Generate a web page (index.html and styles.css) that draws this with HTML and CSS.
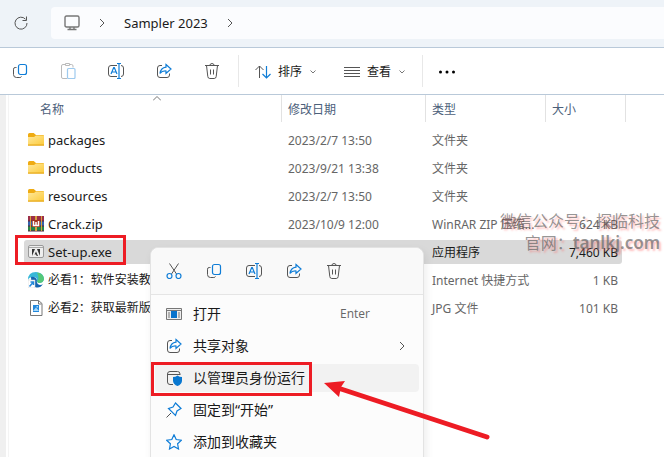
FILE: index.html
```html
<!DOCTYPE html>
<html lang="zh-CN">
<head>
    <meta charset="UTF-8">
    <meta name="viewport" content="width=device-width, initial-scale=1.0">
    <title>Sampler 2023</title>
    <link rel="stylesheet" href="styles.css">
</head>
<body>
    <!-- Shared icons -->
    <svg class="sprite" aria-hidden="true">
        <symbol id="i-copy" viewBox="0 0 16 16">
            <path class="ink" d="M4.5 4.5H3.2Q1.5 4.5 1.5 6.2v5.3q0 3 3 3h3.3q1.2 0 1.7-1"/>
            <rect class="blue" x="6.500" y="1.500" width="8" height="10" rx="2"/>
        </symbol>
        <symbol id="i-paste" viewBox="0 0 16 16">
            <path class="ink" d="M7 15.500H3Q1.500 15.500 1.500 14V3Q1.500 1.500 3 1.500H5M10 1.500h1.500Q13 1.500 13 3v1.500M5.500.500h4v2h-4z"/>
            <rect class="blue" x="7.500" y="5.500" width="7.500" height="10" rx="1"/>
        </symbol>
        <symbol id="i-rename" viewBox="0 0 16 16">
            <path class="ink" d="M9 2.500H3Q.500 2.500 .500 5v6q0 2.500 2.500 2.500H9M13 2.500q2.500 0 2.500 2.500v6q0 2.500-2.500 2.500"/>
            <path class="blue" d="M9 .500h4M11 .500v15M9 15.500h4M3 11l2.700-6.500h.6L9 11M4 9h4"/>
        </symbol>
        <symbol id="i-share" viewBox="0 0 16 16">
            <path class="ink" d="M6 2.500H4Q1.500 2.500 1.500 5v7q0 2.500 2.500 2.500h7q2.500 0 2.500-2.500v-1.500"/>
            <path class="blue" d="M10 1.500 15 6l-5 4.500V8Q6 7.700 4 10.500 4.800 4.800 10 4.200z"/>
        </symbol>
        <symbol id="i-trash" viewBox="0 0 16 16">
            <path class="ink" d="M1 2.500h14M5.800 2.500Q6 .500 8 .500t2.200 2M2.500 2.500l1.300 11q.2 2 2 2h4.400q1.800 0 2-2l1.300-11M6.500 6.500v5M9.500 6.500v5"/>
        </symbol>
        <symbol id="i-down" viewBox="0 0 8 8">
            <path class="soft" d="M1.500 2.500 4 5l2.500-2.500"/>
        </symbol>
        <symbol id="i-right" viewBox="0 0 8 12">
            <path class="ink" d="M2 2l4 4-4 4"/>
        </symbol>
        <symbol id="i-folder" viewBox="0 0 16 16">
            <path fill="#efab12" d="M0 2.500Q0 1 1.500 1h4.200L8 3h7q1 0 1 1v9.500H0z"/>
            <path fill="url(#folder-fill)" d="M0 5h6l2-1.500h8V13H0z"/>
            <path fill="#e5a614" d="M0 12.500h16v1H0z"/>
        </symbol>
        <linearGradient id="folder-fill" x1="0" y1="0" x2="1" y2="1">
            <stop offset="0" stop-color="#ffe89c"/>
            <stop offset="1" stop-color="#fccb3c"/>
        </linearGradient>
    </svg>

    <div class="window">
        <!-- Address bar -->
        <header class="address-bar">
            <button class="icon-button" type="button" aria-label="刷新">
                <svg class="icon" viewBox="0 0 16 16"><path class="ink" d="M12.500 4.200A6 6 0 1 0 14 8M13.500 1.500v4h-4"/></svg>
            </button>
            <nav class="breadcrumb">
                <svg class="icon" viewBox="0 0 16 16"><path class="ink thick" d="M2.500 1h11q1.500 0 1.500 1.500v8q0 1.500-1.500 1.500h-11Q1 12 1 10.500v-8Q1 1 2.500 1zM6 12v2M10 12v2M3.500 14.500h9"/></svg>
                <svg class="arrow"><use href="#i-right"/></svg>
                <a href="#">Sampler 2023</a>
                <svg class="arrow"><use href="#i-right"/></svg>
            </nav>
        </header>

        <!-- Toolbar -->
        <div class="toolbar">
            <div class="tool-group">
                <button class="icon-button" type="button" aria-label="复制"><svg class="icon"><use href="#i-copy"/></svg></button>
                <button class="icon-button" type="button" aria-label="粘贴" disabled><svg class="icon"><use href="#i-paste"/></svg></button>
                <button class="icon-button" type="button" aria-label="重命名"><svg class="icon"><use href="#i-rename"/></svg></button>
                <button class="icon-button" type="button" aria-label="共享"><svg class="icon"><use href="#i-share"/></svg></button>
                <button class="icon-button" type="button" aria-label="删除"><svg class="icon"><use href="#i-trash"/></svg></button>
            </div>
            <div class="tool-group labelled">
                <button class="text-button" type="button">
                    <svg class="icon" viewBox="0 0 16 16"><path class="ink" d="M4.500 14V2M.500 6 4.500 2l4 4"/><path class="blue" d="M11.500 2v12M7.500 10l4 4 4-4"/></svg>
                    排序
                    <svg class="down"><use href="#i-down"/></svg>
                </button>
                <button class="text-button" type="button">
                    <svg class="icon" viewBox="0 0 16 16"><path class="ink" d="M0 3.500h16M0 6.500h16M0 9.500h16M0 12.500h16"/></svg>
                    查看
                    <svg class="down"><use href="#i-down"/></svg>
                </button>
            </div>
            <button class="icon-button more" type="button" aria-label="更多">
                <svg class="icon" viewBox="0 0 16 16"><circle cx="1.500" cy="9" r="1.500"/><circle cx="8" cy="9" r="1.500"/><circle cx="14.500" cy="9" r="1.500"/></svg>
            </button>
        </div>

        <!-- File list -->
        <main class="content">
            <table class="files">
                <colgroup>
                    <col class="col-name"><col class="col-date"><col class="col-type"><col class="col-size"><col class="col-end">
                </colgroup>
                <thead>
                    <tr>
                        <th class="sorted">名称<svg class="sort-mark" viewBox="0 0 8 5"><path class="soft" d="M0 4.500 4 .500l4 4"/></svg></th>
                        <th>修改日期</th>
                        <th>类型</th>
                        <th>大小</th>
                        <th></th>
                    </tr>
                </thead>
                <tbody>
                    <tr>
                        <td><div class="file"><svg class="icon"><use href="#i-folder"/></svg>packages</div></td>
                        <td>2023/2/7 13:50</td><td>文件夹</td><td></td>
                    </tr>
                    <tr>
                        <td><div class="file"><svg class="icon"><use href="#i-folder"/></svg>products</div></td>
                        <td>2023/9/21 13:38</td><td>文件夹</td><td></td>
                    </tr>
                    <tr>
                        <td><div class="file"><svg class="icon"><use href="#i-folder"/></svg>resources</div></td>
                        <td>2023/2/7 13:50</td><td>文件夹</td><td></td>
                    </tr>
                    <tr>
                        <td><div class="file">
                            <svg class="icon" viewBox="0 0 16 16">
                                <path fill="#9c2f48" d="M0 0h16v5H0z"/><path fill="#3565ad" d="M0 5h16v5H0z"/><path fill="#258547" d="M0 10h16v5H0z"/>
                                <path fill="#5d2442" d="M0 4.500h16v1H0zM0 9.500h16v1H0zM0 14.500h16v1H0z"/>
                                <path fill="#d9a23c" d="M2 0h1v15H2zM13 0h1v15h-1zM7 0h2v15H7z"/>
                                <path fill="#a3341f" d="M4 4h8v7H4z"/><path fill="none" stroke="#fff" stroke-width="1.500" d="M5.500 5v4.500h5V5M8 6v3"/>
                            </svg>Crack.zip</div></td>
                        <td>2023/10/9 12:00</td><td>WinRAR ZIP 压缩...</td><td>624 KB</td>
                    </tr>
                    <tr class="selected">
                        <td><div class="file">
                            <svg class="icon" viewBox="0 0 16 16">
                                <rect x=".500" y="1.500" width="15" height="12" rx="1.500" fill="#eee" stroke="#999"/>
                                <path stroke="#aaa" d="M1 3.500h14"/>
                                <path fill="#333" d="M4 5h3l-3 7zM12 5H9l3 7zM8 7.500l2 4.500H8.700l-.7-1.500H6.500z"/>
                            </svg>Set-up.exe</div></td>
                        <td></td><td>应用程序</td><td>7,460 KB</td><td></td>
                    </tr>
                    <tr>
                        <td><div class="file cjk">
                            <svg class="icon" viewBox="0 0 16 16">
                                <path fill="#38b8d8" d="M0 8Q0 0 8 0q7.500.500 8 7-1 4-5 4-3-1-2-3 0-3-4-3Q1 5 0 8z"/>
                                <path fill="#55c878" d="M9 .500q7 1 7 7-1 3.500-5 3.500-2-.5-2-2 3-2 0-8.500z"/>
                                <path fill="#1565b0" d="M3 5q4-1 6 3-1 4 3 5 2 0 3-1-3 5-8 3-4-2-4-10z"/>
                                <path fill="#fff" stroke="#ccc" stroke-width=".5" d="M0 8h7v8H0z"/>
                                <path fill="none" stroke="#2388d9" stroke-width="1.500" d="M1.500 14.500 5 10.500M2.500 10h3v3"/>
                            </svg>必看1：软件安装教程</div></td>
                        <td></td><td>Internet 快捷方式</td><td>1 KB</td>
                    </tr>
                    <tr>
                        <td><div class="file cjk">
                            <svg class="icon" viewBox="0 0 16 16">
                                <path fill="#fff" stroke="#777" d="M2.500.500h8l3.500 3v12H2.500zM10.500.500v3.500h3"/>
                                <path fill="#2388dd" d="M5 5h6v7H5z"/><path fill="#a9dafa" d="M5 11l3-3.500 3 3.500zM8.500 6H10v1.500H8.500z"/>
                            </svg>必看2：获取最新版</div></td>
                        <td></td><td>JPG 文件</td><td>101 KB</td>
                    </tr>
                </tbody>
            </table>
        </main>

        <div class="watermark">
            <p>微信公众号：探临科技</p>
            <p>官网：<b>tanlkj.com</b></p>
        </div>

        <!-- Context menu -->
        <div class="menu">
            <div class="menu-tools">
                <button class="icon-button" type="button" aria-label="剪切">
                    <svg class="icon" viewBox="0 0 16 16"><path class="ink" d="M3.500.500l7 10.500M12.500.500l-7 10.500"/><circle class="blue" cx="3.500" cy="13" r="2.500"/><circle class="blue" cx="12.500" cy="13" r="2.500"/></svg>
                </button>
                <button class="icon-button" type="button" aria-label="复制"><svg class="icon"><use href="#i-copy"/></svg></button>
                <button class="icon-button" type="button" aria-label="重命名"><svg class="icon"><use href="#i-rename"/></svg></button>
                <button class="icon-button" type="button" aria-label="共享"><svg class="icon"><use href="#i-share"/></svg></button>
                <button class="icon-button" type="button" aria-label="删除"><svg class="icon"><use href="#i-trash"/></svg></button>
            </div>
            <div class="menu-list">
                <button class="menu-item" type="button">
                    <svg class="icon" viewBox="0 0 16 16"><path fill="#eee" stroke="#777" d="M.500 2.500h15v11H.500z"/><path stroke="#777" d="M1 4.500h14M2 7h2M2 9h2M2 11h2M12 7h2M12 9h2M12 11h2"/><path fill="#0873cc" d="M5 5h6v7H5z"/></svg>
                    打开<kbd>Enter</kbd>
                </button>
                <button class="menu-item" type="button">
                    <svg class="icon"><use href="#i-share"/></svg>
                    共享对象<svg class="arrow"><use href="#i-right"/></svg>
                </button>
                <button class="menu-item active" type="button">
                    <svg class="icon" viewBox="0 0 16 16"><path class="ink" d="M7 14.500H4Q1.500 14.500 1.500 12V4Q1.500 1.500 4 1.500h7.500Q14 1.500 14 4v1M1.500 4.500H14"/><path fill="#0877d0" d="M11.500 5.500q2 1.500 4.500 1.500v4q-.5 3.500-4.500 5-4-1.500-4.500-5V7q2.500 0 4.500-1.500z"/></svg>
                    以管理员身份运行
                </button>
                <button class="menu-item" type="button">
                    <svg class="icon" viewBox="0 0 16 16"><path class="ink" d="M.500 15.500 5 11"/><path class="blue" d="M9.500 1 15 6.500l-4 2.500-1.500 4.500L2.500 6.500 7 5z"/></svg>
                    固定到“开始”
                </button>
                <button class="menu-item" type="button">
                    <svg class="icon" viewBox="0 0 16 16"><path class="blue" d="M8 .800l2.200 4.700 5.200.7-3.800 3.600.9 5.200L8 12.500 3.500 15l.9-5.200L.600 6.200l5.200-.7z"/></svg>
                    添加到收藏夹
                </button>
            </div>
        </div>

        <!-- Marks over the steps to follow -->
        <div class="mark mark-file"></div>
        <div class="mark mark-menu"></div>
        <svg class="pointer" viewBox="0 0 166 60">
            <path d="M14 7 163 56" stroke="#ed1c24" stroke-width="5" stroke-linecap="round"/>
            <path d="M0 2 21 0 17 6 15 16z" fill="#ed1c24"/>
        </svg>
    </div>
</body>
</html>
```

FILE: styles.css
```css
* {
    margin: 0;
    padding: 0;
    box-sizing: border-box;
}

body {
    font-family: "Noto Sans", "Noto Sans CJK SC", sans-serif;
    font-size: 12px;
    line-height: 16px;
    color: #1a1a1a;
    background: #fff;
}

button {
    font: inherit;
    color: inherit;
    background: none;
    border: none;
}

.window {
    position: relative;
    height: 100vh;
    overflow: hidden;
}

/* Icons */
.sprite {
    position: absolute;
    width: 0;
    height: 0;
}

.icon {
    display: block;
    flex: none;
    width: 16px;
    height: 16px;
}

.ink,
.blue,
.soft {
    fill: none;
    stroke: #555;
    stroke-width: 1;
}

.blue {
    stroke: #0f7dd7;
    stroke-width: 1.2;
}

.soft {
    stroke: #777;
}

.thick {
    stroke: #777;
    stroke-width: 1.4;
}

.arrow {
    width: 8px;
    height: 12px;
}

.down {
    width: 8px;
    height: 8px;
}

.icon-button {
    display: flex;
    align-items: center;
    justify-content: center;
    width: 32px;
    height: 32px;
}

.icon-button:disabled {
    opacity: 0.4;
}

/* Address bar */
.address-bar {
    display: flex;
    align-items: center;
    gap: 14px;
    height: 48px;
    padding-left: 5px;
    padding-bottom: 1px;
    background: #eef3f8;
    border-bottom: 1px solid #b9c9d9;
}

.breadcrumb {
    display: flex;
    flex: 1;
    align-items: center;
    gap: 18px;
    height: 32px;
    padding-left: 13px;
    background: #fbfcfe;
    border-radius: 4px 0 0 4px;
}

.breadcrumb a {
    font-size: 13px;
    color: #1a1a1a;
    text-decoration: none;
}

/* Toolbar */
.toolbar {
    display: flex;
    align-items: center;
    height: 47px;
    padding-left: 4px;
    border-bottom: 1px solid #b9c9d9;
}

.tool-group {
    display: flex;
    align-items: center;
    gap: 16px;
    height: 32px;
    padding-right: 10px;
    border-right: 1px solid #e8e8e8;
}

.labelled {
    gap: 27px;
    padding: 0 16px;
}

.text-button {
    display: flex;
    align-items: center;
    gap: 7px;
    padding-top: 1px;
}

.more {
    margin-left: 8px;
}

/* File list */
.content {
    display: flow-root;
    height: 100%;
    margin-left: 8px;
    padding-left: 16px;
    border-left: 1px solid #f4f4f4;
    box-shadow: -2px 0 #fff, -8px 0 #f0f0f0;
}

.files {
    width: 602px;
    margin-top: -4px;
    margin-left: -1px;
    table-layout: fixed;
    border-spacing: 0 4px;
    color: #666;
}

.col-name {
    width: 258px;
}

.col-date {
    width: 144px;
}

.col-type {
    width: 120px;
}

.col-size {
    width: 76px;
}

.col-end {
    width: 4px;
}

.files th {
    height: 29px;
    padding-left: 6px;
    font-weight: normal;
    text-align: left;
    color: #4c607a;
    background: linear-gradient(#e2e2e2, #e2e2e2) no-repeat right top / 1px 27px;
}

.files th:nth-child(4) {
    background: none;
}

.files th:last-child {
    padding: 0;
}

.files .sorted {
    position: relative;
    padding-left: 16px;
}

.sort-mark {
    position: absolute;
    top: 1px;
    left: 50%;
    width: 8px;
    height: 5px;
}

.files td {
    height: 24px;
    padding-top: 2px;
    padding-left: 6px;
    white-space: nowrap;
}

.files td:first-child {
    padding-top: 0;
    padding-left: 4px;
}

.files td:nth-child(4) {
    padding-left: 0;
    padding-right: 4px;
    text-align: right;
}

.files td:nth-child(5) {
    padding: 0;
}

.file {
    display: flex;
    align-items: center;
    gap: 4px;
    font-size: 13px;
    color: #1a1a1a;
}

.cjk {
    font-size: 12px;
}

.selected td {
    color: #1a1a1a;
    background: #d9d9d9;
}

.selected td:first-child {
    border-radius: 3px 0 0 3px;
}

.selected td:nth-child(4) {
    border-radius: 0 3px 3px 0;
}

.selected td:nth-child(5) {
    background: none;
}

.watermark {
    position: absolute;
    top: 211px;
    right: 4px;
    font-size: 16px;
    line-height: 21px;
    text-align: right;
    color: rgba(90, 90, 90, 0.65);
    text-shadow: 2px 2px 2px rgba(255, 90, 90, 0.4);
}

.watermark b {
    font-size: 17px;
    font-weight: 600;
}

/* Context menu */
.menu {
    position: absolute;
    top: 247px;
    bottom: -40px;
    left: 150px;
    width: 274px;
    background: #fcfcfc;
    border: 1px solid #e3e3e3;
    border-radius: 8px;
    box-shadow: 2px 4px 8px rgba(0, 0, 0, 0.08);
}

.menu-tools {
    display: flex;
    align-items: center;
    gap: 8px;
    height: 47px;
    padding-left: 7px;
    background: #f9f9f9;
    border-bottom: 1px solid #e5e5e5;
    border-radius: 8px 8px 0 0;
}

.menu-list {
    display: flex;
    flex-direction: column;
    gap: 4px;
    padding: 5px 4px;
}

.menu-item {
    display: flex;
    align-items: center;
    gap: 11px;
    height: 28px;
    padding: 0 13px 0 11px;
    border-radius: 4px;
    font-size: 14px;
    text-align: left;
}

.menu-item.active {
    background: #f2f2f2;
}

.menu-item kbd {
    margin-left: auto;
    padding-right: 36px;
    font-family: "Open Sans", sans-serif;
    font-size: 12px;
    color: #666;
}

.menu-item .arrow {
    margin-left: auto;
}

/* Marks */
.mark {
    position: absolute;
    border: 3px solid #ed1c24;
}

.mark-file {
    top: 235px;
    left: 15px;
    width: 111px;
    height: 30px;
}

.mark-menu {
    top: 362px;
    left: 151px;
    width: 161px;
    height: 34px;
}

.pointer {
    position: absolute;
    top: 381px;
    left: 324px;
    width: 166px;
    height: 60px;
}
```
